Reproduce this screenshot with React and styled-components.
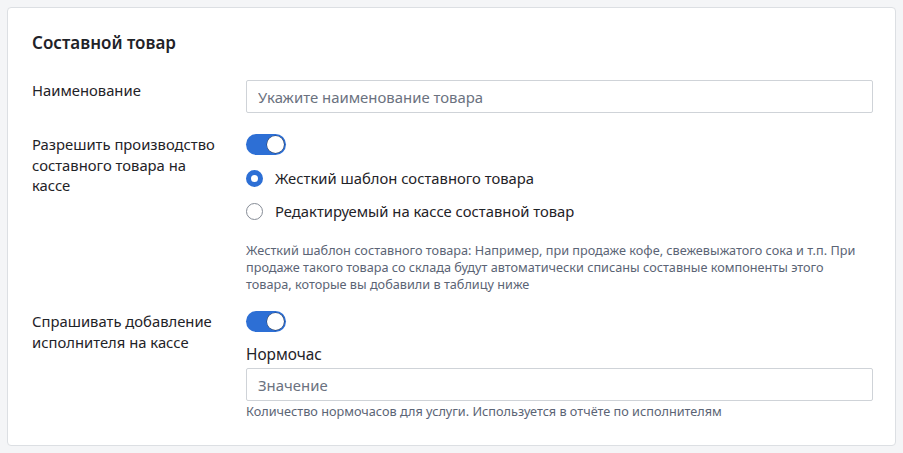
import React from "react";
import styled, { createGlobalStyle } from "styled-components";

const GlobalStyle = createGlobalStyle`
  * { box-sizing: border-box; }
  body {
    margin: 0;
    background: #f4f5f7;
    font-family: "Noto Sans", "Open Sans", sans-serif;
    color: #1f2328;
  }
`;

const Page = styled.div`
  padding: 7px;
`;

const Card = styled.section`
  background: #fff;
  border: 1px solid #dcdfe3;
  border-radius: 4px;
  padding: 23px 22px 24px 24px;
  height: 439px;
`;

const Title = styled.h2`
  margin: 0 0 26px;
  font-size: 17px;
  font-weight: 600;
  line-height: 23px;
`;

const Row = styled.div`
  display: grid;
  grid-template-columns: 214px 1fr;
  margin-bottom: ${(p) => p.gap || 0}px;
`;

const Label = styled.div`
  font-size: 14.8px;
  line-height: 20.5px;
  padding-right: 22px;
`;

const Field = styled.div`
  display: flex;
  flex-direction: column;
  align-items: flex-start;
`;

const Input = styled.input`
  width: 100%;
  height: 33px;
  border: 1px solid #cfd3d8;
  border-radius: 2px;
  padding: 0 11px;
  font: inherit;
  font-size: 14.9px;
  color: #1f2328;
  outline: none;
  margin-top: ${(p) => p.top || 0}px;
  &::placeholder { color: #6b7280; }
`;

const Switch = styled.span`
  position: relative;
  display: inline-block;
  width: 40px;
  height: 21px;
  border-radius: 11px;
  background: #2d6fd5;
  &::after {
    content: "";
    position: absolute;
    top: 2px;
    right: 2px;
    width: 17px;
    height: 17px;
    border-radius: 50%;
    background: #fff;
    box-shadow: 0 0 0 0.5px #2a3a55;
  }
`;

const Radio = styled.label`
  display: flex;
  align-items: center;
  gap: 12px;
  font-size: 14.8px;
  line-height: 20px;
  margin-top: 13px;
`;

const Dot = styled.span`
  width: 17px;
  height: 17px;
  border-radius: 50%;
  flex: none;
  border: ${(p) => (p.checked ? "5.5px solid #2d6fd5" : "1px solid #868c96")};
  background: #fff;
`;

const Help = styled.p`
  margin: ${(p) => p.top || 0}px 0 0;
  padding-right: 11px;
  font-size: 12.7px;
  line-height: 17px;
  color: #5b6475;
`;

const SubLabel = styled.div`
  font-size: 15.4px;
  line-height: 20px;
  margin-top: 13px;
`;

export default function App() {
  return (
    <>
      <GlobalStyle />
      <Page>
        <Card>
          <Title>Составной товар</Title>
          <Row gap={21}>
            <Label>Наименование</Label>
            <Field>
              <Input placeholder="Укажите наименование товара" />
            </Field>
          </Row>
          <Row gap={18}>
            <Label>Разрешить производство составного товара на кассе</Label>
            <Field>
              <Switch />
              <Radio>
                <Dot checked />
                Жесткий шаблон составного товара
              </Radio>
              <Radio>
                <Dot />
                Редактируемый на кассе составной товар
              </Radio>
              <Help top={21}>
                Жесткий шаблон составного товара: Например, при продаже кофе,
                свежевыжатого сока и т.п. При продаже такого товара со склада
                будут автоматически списаны составные компоненты этого товара,
                которые вы добавили в таблицу ниже
              </Help>
            </Field>
          </Row>
          <Row>
            <Label>Спрашивать добавление исполнителя на кассе</Label>
            <Field>
              <Switch />
              <SubLabel>Нормочас</SubLabel>
              <Input top={3} placeholder="Значение" />
              <Help top={2}>
                Количество нормочасов для услуги. Используется в отчёте по
                исполнителям
              </Help>
            </Field>
          </Row>
        </Card>
      </Page>
    </>
  );
}
